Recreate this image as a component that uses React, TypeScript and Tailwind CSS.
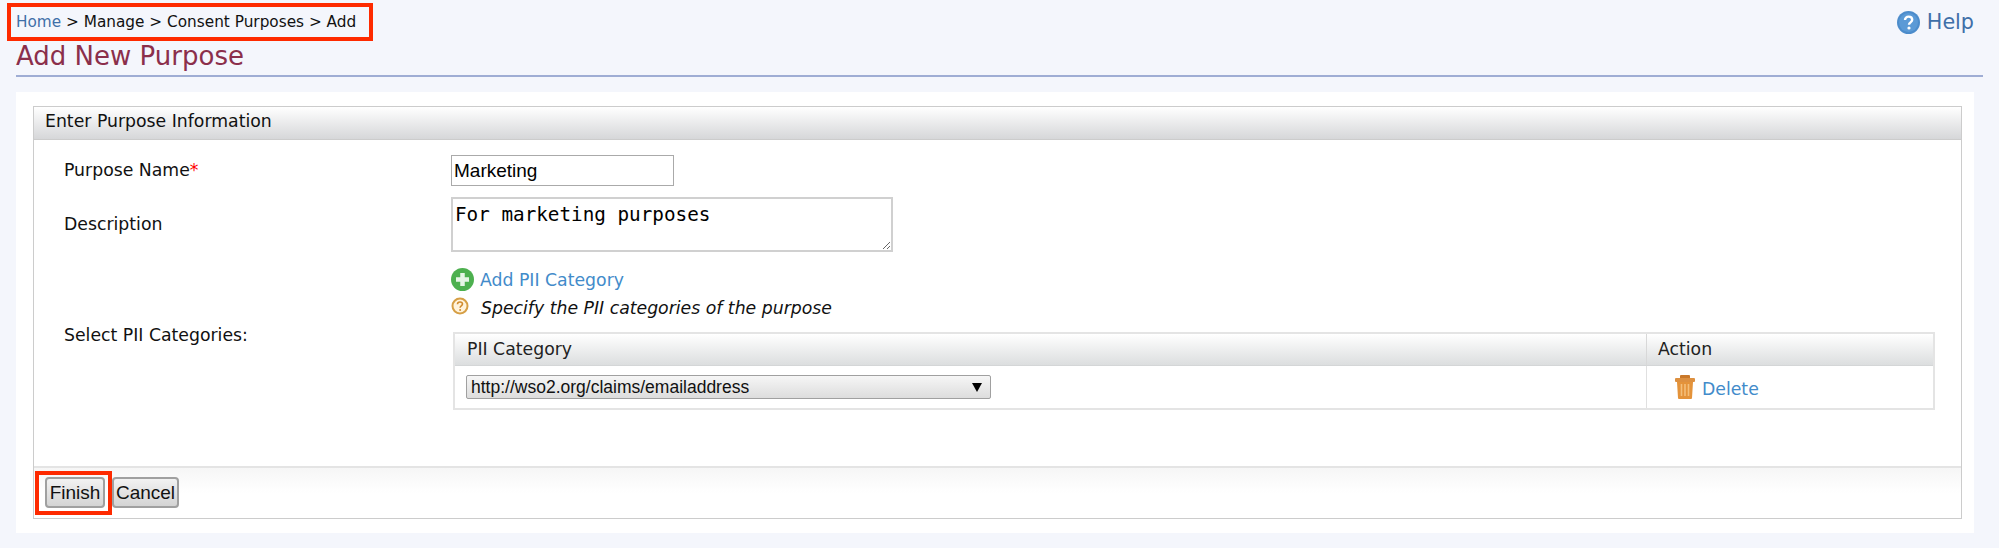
export default function App() {
  const dv = "font-['DejaVu_Sans',sans-serif]";
  const lib = "font-['Liberation_Sans',sans-serif]";
  return (
    <div className={`${dv} relative h-[548px] w-[1999px] overflow-hidden bg-[#f4f6fc] text-[17.3px] text-[#111111]`}>
      <div className="px-[16px]">
        <div className="flex h-[41px] items-start justify-between">
          <div className="ml-[-9px] mt-[3px] flex h-[38px] w-[366px] items-center border-4 border-[#fe2a00] pl-[5px] text-[15.3px] whitespace-pre">
            <span className="text-[#3f6fa8]">Home</span>
            <span> &gt; Manage &gt; Consent Purposes &gt; Add</span>
          </div>
          <div className="mr-[9px] mt-[8px] flex items-center gap-[7px] text-[20.7px] leading-[28px] text-[#3f6fa8]">
            <svg width="23" height="23" viewBox="0 0 23 23">
              <circle cx="11.5" cy="11.5" r="11.5" fill="#4c8ccb" />
              <circle cx="11.5" cy="11.5" r="9.5" fill="#5b9ad6" />
              <path d="M8 9c0-2 1.6-3.4 3.6-3.4S15.2 6.9 15.2 8.8c0 2.6-3.2 2.6-3.2 5" fill="none" stroke="#fff" strokeWidth="2.4" />
              <circle cx="12" cy="17" r="1.6" fill="#fff" />
            </svg>
            <span>Help</span>
          </div>
        </div>
        <h1 className="h-[36px] border-b-2 border-[#9fadd4] text-[26px] leading-[30px] font-normal text-[#8b2f4b]">Add New Purpose</h1>
        <div className="mt-[15px] h-[441px] w-[1958px] bg-white pl-[17px] pr-[12px] pt-[14px]">
          <div className="flex h-[413px] flex-col border border-[#cccccc]">
            <div className="flex h-[33px] items-center border-b border-[#cccccc] bg-gradient-to-b from-white to-[#d6d7d9] pb-[2px] pl-[11px]">Enter Purpose Information</div>
            <div className="grid flex-1 grid-cols-[387px_1fr] content-start pl-[30px] pr-[26px]">
              <div className="flex h-[46px] items-end pb-[2px]">
                <span>Purpose Name<span className="text-[#ff0000]">*</span></span>
              </div>
              <div className="flex h-[46px] items-end">
                <input readOnly value="Marketing" className={`${lib} h-[31px] w-[223px] border border-[#aaaaaa] bg-white pl-[2px] text-[19px] text-black outline-none`} />
              </div>
              <div className="mt-[11px] flex h-[55px] items-center">Description</div>
              <div className="mt-[11px] h-[55px]">
                <textarea readOnly value="For marketing purposes" className="block h-[55px] w-[442px] resize-y border-2 border-[#d0d0d0] bg-white px-[2px] pt-[5px] font-['DejaVu_Sans_Mono',monospace] text-[19.3px] leading-[22px] text-black outline-none" />
              </div>
              <div className="flex items-center pb-[5px] pt-[15px]">Select PII Categories:</div>
              <div className="pt-[15px]">
                <div className="flex h-[24px] items-center gap-[6px] text-[17.3px] text-[#428bca]">
                  <svg width="23" height="23" viewBox="0 0 23 23">
                    <circle cx="11.5" cy="11.5" r="11.5" fill="#4db04f" />
                    <path d="M11.5 5v13M5 11.5h13" stroke="#e6f5e6" strokeWidth="4.5" />
                  </svg>
                  <span className="mt-[4px]">Add PII Category</span>
                </div>
                <div className="mt-[6px] flex h-[18px] items-start gap-[12px] italic">
                  <svg width="18" height="18" viewBox="0 0 18 18">
                    <circle cx="9" cy="9" r="7.5" fill="#fff3dc" stroke="#d69f45" strokeWidth="2" />
                    <path d="M6.5 7.2c0-1.4 1.1-2.2 2.5-2.2s2.5.9 2.5 2.1c0 1.8-2.4 1.8-2.4 3.6" fill="none" stroke="#d08a2c" strokeWidth="1.6" />
                    <circle cx="9.1" cy="13" r="1" fill="#d08a2c" />
                  </svg>
                  <span className="leading-[22px]">Specify the PII categories of the purpose</span>
                </div>
                <div className="ml-[2px] mt-[17px] w-[1482px] border-2 border-[#e4e4e4]">
                  <div className="grid h-[32px] grid-cols-[1192px_1fr] border-b border-[#d4d6d7] bg-gradient-to-b from-white to-[#dcdedf] text-[#222222]">
                    <div className="flex items-center border-r border-[#d8d8d8] pl-[12px]">PII Category</div>
                    <div className="flex items-center pl-[11px]">Action</div>
                  </div>
                  <div className="grid h-[42px] grid-cols-[1192px_1fr]">
                    <div className="flex items-center border-r border-[#e0e0e0] pl-[11px]">
                      <div className={`${lib} flex h-[24px] w-[525px] items-center justify-between rounded-[2px] border border-[#a0a0a0] bg-gradient-to-b from-[#f6f6f6] to-[#dddddd] pl-[4px] pr-[4px] text-[17.5px] text-[#111111]`}>
                        <span>http://wso2.org/claims/emailaddress</span>
                        <span className="mr-[4px] h-0 w-0 border-x-[5px] border-t-[9px] border-x-transparent border-t-black"></span>
                      </div>
                    </div>
                    <div className="flex items-center gap-[7px] pl-[28px] text-[17.3px] text-[#428bca]">
                      <svg width="20" height="24" viewBox="0 0 20 24">
                        <rect x="5" y="0" width="10" height="4" rx="1" fill="#c9782a" />
                        <rect x="0" y="3" width="20" height="4" rx="1" fill="#dd9040" />
                        <path d="M2 7h16l-1 16a1 1 0 0 1-1 1H4a1 1 0 0 1-1-1z" fill="#e4933a" />
                        <path d="M6.5 9v12M10 9v12M13.5 9v12" stroke="#f4bf7a" strokeWidth="1.6" />
                      </svg>
                      <span className="mt-[5px]">Delete</span>
                    </div>
                  </div>
                </div>
              </div>
            </div>
            <div className={`${lib} flex h-[52px] items-start gap-[7px] border-t-2 border-[#e4e4e4] bg-gradient-to-b from-[#f6f6f6] via-white to-white pl-[11px] pt-[9px] text-[19px] text-[#111111]`}>
              <div className="flex h-[31px] w-[60px] items-center justify-center rounded-[4px] border-2 border-[#a0a0a0] bg-gradient-to-b from-[#f2f2f2] to-[#d4d4d4] pt-[1px]">Finish</div>
              <div className="flex h-[31px] w-[67px] items-center justify-center rounded-[4px] border-2 border-[#a0a0a0] bg-gradient-to-b from-[#f2f2f2] to-[#d4d4d4] pt-[1px]">Cancel</div>
            </div>
          </div>
        </div>
      </div>
      <div className="absolute left-[35px] top-[471px] h-[44px] w-[77px] border-4 border-[#fe2a00]"></div>
    </div>
  );
}
